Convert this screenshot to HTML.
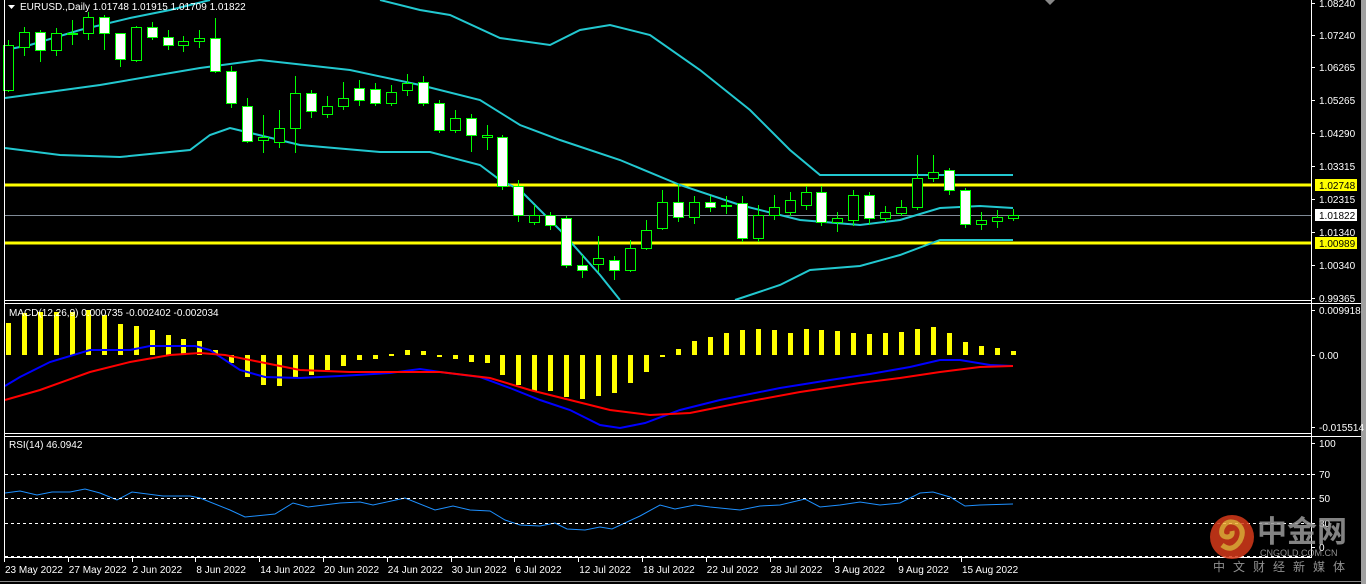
<!DOCTYPE html>
<html><head><meta charset="utf-8"><style>
html,body{margin:0;padding:0;background:#000;width:1366px;height:584px;overflow:hidden}
svg{display:block}
text{font-family:"Liberation Sans",sans-serif;font-size:10px;fill:#fff}
</style></head><body>
<svg id="s" width="1366" height="584" xmlns="http://www.w3.org/2000/svg">
<rect width="1366" height="584" fill="#000"/>
<rect x="1361" y="0" width="5" height="584" fill="#a0a0a0"/>
<g id="g"></g>
<!-- frames -->
<g stroke="#fff" stroke-width="1" fill="none">
<line x1="4.5" y1="0" x2="4.5" y2="558"/>
<line x1="1311.5" y1="0" x2="1311.5" y2="558"/>
<line x1="4" y1="300.5" x2="1311" y2="300.5"/>
<line x1="4" y1="303.5" x2="1361" y2="303.5"/>
<line x1="4" y1="433.5" x2="1311" y2="433.5"/>
<line x1="4" y1="436.5" x2="1361" y2="436.5"/>
<line x1="4" y1="557.5" x2="1311" y2="557.5"/>
<line x1="0" y1="581.5" x2="1361" y2="581.5" stroke="#888"/>
</g>
<g stroke="#fff" stroke-dasharray="3,3">
<line x1="5" y1="474.5" x2="1311" y2="474.5"/>
<line x1="5" y1="498.5" x2="1311" y2="498.5"/>
<line x1="5" y1="523.5" x2="1311" y2="523.5"/>
<line x1="5" y1="556.5" x2="1311" y2="556.5"/>
</g>
<text x="20" y="10">EURUSD.,Daily  1.01748 1.01915 1.01709 1.01822</text>
<path d="M8 5 L15 5 L11.5 9Z" fill="#fff"/>
<path d="M1045 0 L1055 0 L1050 5Z" fill="#888"/>
<text x="9" y="316">MACD(12,26,9) 0.000735 -0.002402 -0.002034</text>
<text x="9" y="448">RSI(14) 46.0942</text>
<g id="ax"></g>
<!-- watermark -->
<g opacity="0.85">
<circle cx="1232" cy="537" r="22" fill="#d63a1a"/>
<path d="M1222 545 q10 8 18 -4 q6 -12 -4 -18 q-10 -4 -14 6 q-2 8 6 8 q5 -1 4 -6" fill="none" stroke="#f6b23a" stroke-width="5"/>
<text x="1257" y="542" style="font-family:'Noto Sans CJK SC',sans-serif;font-size:30px;font-weight:bold;fill:#9a9a9a">中金网</text>
<text x="1260" y="556" style="font-size:9px;fill:#aaa">CNGOLD.COM.CN</text>
<text x="1213" y="571" style="font-family:'Noto Sans CJK SC',sans-serif;font-size:12px;fill:#aaa;letter-spacing:8px">中文财经新媒体</text>
</g>
</svg>
<script>
var g=document.getElementById('g'),h='';
function pl(pts,c,w){h+='<polyline fill="none" stroke="'+c+'" stroke-width="'+w+'" points="'+pts.map(function(p){return p.join(',')}).join(' ')+'"/>';}
// yellow levels & price line
h+='<line x1="5" y1="215.5" x2="1311" y2="215.5" stroke="#7f8a96"/>';
h+='<rect x="5" y="183.5" width="1306" height="3" fill="#ffff00"/>';
h+='<rect x="5" y="241.5" width="1306" height="3" fill="#ffff00"/>';
// bollinger
pl([[5,50],[30,45],[80,30],[130,18],[170,10],[210,0]],'#22c8d0',2);
pl([[380,0],[420,10],[450,15],[500,38],[550,45],[580,30],[610,25],[650,35],[700,70],[750,110],[790,150],[820,175],[1013,175]],'#22c8d0',2);
pl([[5,98],[100,85],[200,68],[260,60],[350,70],[420,85],[480,100],[520,125],[560,140],[620,160],[680,185],[740,205],[800,220],[860,225],[900,220],[940,208],[980,206],[1013,208]],'#22c8d0',2);
pl([[5,148],[60,155],[120,157],[190,150],[210,135],[230,128],[300,145],[380,152],[430,152],[480,165],[500,180],[520,190],[560,230],[600,275],[620,300]],'#22c8d0',2);
pl([[735,300],[780,285],[810,270],[860,266],[900,255],[940,240],[990,240],[1013,240]],'#22c8d0',2);
// candles [top,bottom,bear(1=white),wickTop,wickBot]
var c=[[45,90,0,40,92],[32,47,0,27,56],[32,50,1,30,62],[33,50,0,28,56],[33,34,0,20,45],[17,33,0,12,40],[17,33,1,15,50],[33,59,1,33,67],[27,60,0,26,62],[27,37,1,22,40],[37,45,1,30,50],[41,45,0,36,52],[38,41,0,30,48],[38,71,1,18,73],[71,103,1,66,108],[106,141,1,98,143],[137,140,0,115,153],[128,142,0,110,148],[93,128,0,76,153],[93,111,1,90,118],[106,114,0,96,118],[98,106,0,82,110],[88,100,1,80,106],[89,103,1,83,106],[92,103,0,85,106],[83,90,0,74,96],[82,103,1,76,106],[103,130,1,100,133],[118,130,0,110,133],[118,135,1,114,152],[135,137,0,125,150],[137,186,1,135,190],[186,215,1,180,222],[215,222,0,205,225],[215,225,1,212,230],[218,265,1,216,268],[265,270,1,255,278],[258,264,0,236,272],[260,270,1,256,280],[248,270,0,240,272],[230,248,0,220,250],[202,228,0,190,230],[202,217,1,184,222],[202,217,0,196,224],[202,207,1,196,212],[205,206,0,196,214],[203,238,1,196,242],[215,238,0,205,242],[207,215,0,195,220],[200,212,0,192,216],[192,205,0,186,210],[192,222,1,186,226],[218,222,0,212,232],[195,220,0,190,226],[195,218,1,192,225],[212,218,0,206,222],[207,213,0,200,216],[178,207,0,155,210],[172,178,0,155,182],[170,190,1,168,195],[190,224,1,188,228],[220,224,0,212,230],[217,221,0,210,228],[215,218,0,209,221]];
for(var i=0;i<c.length;i++){var x=8+i*15.95,d=c[i];var cx=Math.round(x)+0.5;
h+='<line x1="'+cx+'" y1="'+d[3]+'" x2="'+cx+'" y2="'+d[4]+'" stroke="#00ff00"/>';
h+='<rect x="'+(cx-5)+'" y="'+(d[0]+0.5)+'" width="10" height="'+Math.max(1,d[1]-d[0])+'" fill="'+(d[2]?'#fff':'#000')+'" stroke="#00ff00"/>';}
// MACD histogram
var m=[323,313,312,312,312,310,315,324,326,330,335,339,341,350,363,377,385,386,377,375,370,366,360,359,354,350,351,357,359,362,363,375,385,391,391,397,399,396,393,383,372,357,349,341,337,333,330,329,330,333,329,330,331,333,334,333,332,329,327,333,342,346,348,351];
for(i=0;i<m.length;i++){var x=Math.round(8+i*15.95)-2;var t=Math.min(m[i],355),b=Math.max(m[i],355);h+='<rect x="'+x+'" y="'+t+'" width="5" height="'+Math.max(2,b-t)+'" fill="#ffff00"/>';}
pl([[5,386],[20,377],[50,362],[90,350],[130,350],[150,346],[195,346],[210,350],[240,370],[265,377],[300,378],[340,376],[390,373],[420,369],[440,372],[480,377],[510,388],[540,400],[570,410],[600,425],[620,428],[645,423],[680,410],[720,400],[780,388],[830,380],[870,374],[910,367],[940,360],[960,360],[990,365],[1013,366]],'#0000ff',2);
pl([[5,400],[40,390],[90,372],[130,362],[170,355],[200,353],[225,355],[260,362],[300,370],[350,372],[400,372],[440,372],[490,378],[530,390],[570,400],[610,410],[650,415],[690,413],[740,403],[800,392],[860,383],[900,378],[940,372],[980,367],[1013,366]],'#ff0000',2);
pl([[5,493],[20,491],[37,495],[52,492],[70,492],[85,489],[100,493],[117,500],[132,492],[163,496],[190,496],[200,498],[230,510],[245,517],[275,514],[293,503],[308,507],[340,503],[360,502],[373,505],[405,498],[435,510],[453,506],[470,510],[490,511],[505,520],[520,525],[540,526],[555,523],[567,529],[585,530],[600,527],[612,529],[640,516],[660,505],[675,509],[695,505],[710,507],[740,510],[760,506],[780,505],[805,499],[820,507],[840,505],[860,502],[880,505],[900,503],[920,493],[933,492],[950,497],[965,506],[980,505],[1013,504]],'#1e90ff',1);
g.innerHTML=h;
var a='';
var pr=[['1.08240',3],['1.07240',35],['1.06265',67],['1.05265',100],['1.04290',133],['1.03315',166],['1.02315',199],['1.01340',232],['1.00340',265],['0.99365',298],['0.009918',310],['0.00',355],['-0.015514',427],['100',443],['70',474],['50',498],['30',523],['0',547]];
pr.forEach(function(p){a+='<line x1="1311" y1="'+(p[1]+0.5)+'" x2="1315" y2="'+(p[1]+0.5)+'" stroke="#fff"/><text x="1319" y="'+(p[1]+4)+'">'+p[0]+'</text>';});
[['1.02748',185,'#ffff00'],['1.01822',215,'#fff'],['1.00989',243,'#ffff00']].forEach(function(p){a+='<rect x="1315" y="'+(p[1]-6)+'" width="42" height="12" fill="'+p[2]+'"/><text x="1319" y="'+(p[1]+4)+'" style="fill:#000">'+p[0]+'</text>';});
var ds=['23 May 2022','27 May 2022','2 Jun 2022','8 Jun 2022','14 Jun 2022','20 Jun 2022','24 Jun 2022','30 Jun 2022','6 Jul 2022','12 Jul 2022','18 Jul 2022','22 Jul 2022','28 Jul 2022','3 Aug 2022','9 Aug 2022','15 Aug 2022'];
ds.forEach(function(d,i){var x=4+i*63.8;a+='<line x1="'+(Math.round(x)+0.5)+'" y1="558" x2="'+(Math.round(x)+0.5)+'" y2="562" stroke="#fff"/><text x="'+(x+1)+'" y="573">'+d+'</text>';});
document.getElementById('ax').innerHTML=a;
</script>
</body></html>
